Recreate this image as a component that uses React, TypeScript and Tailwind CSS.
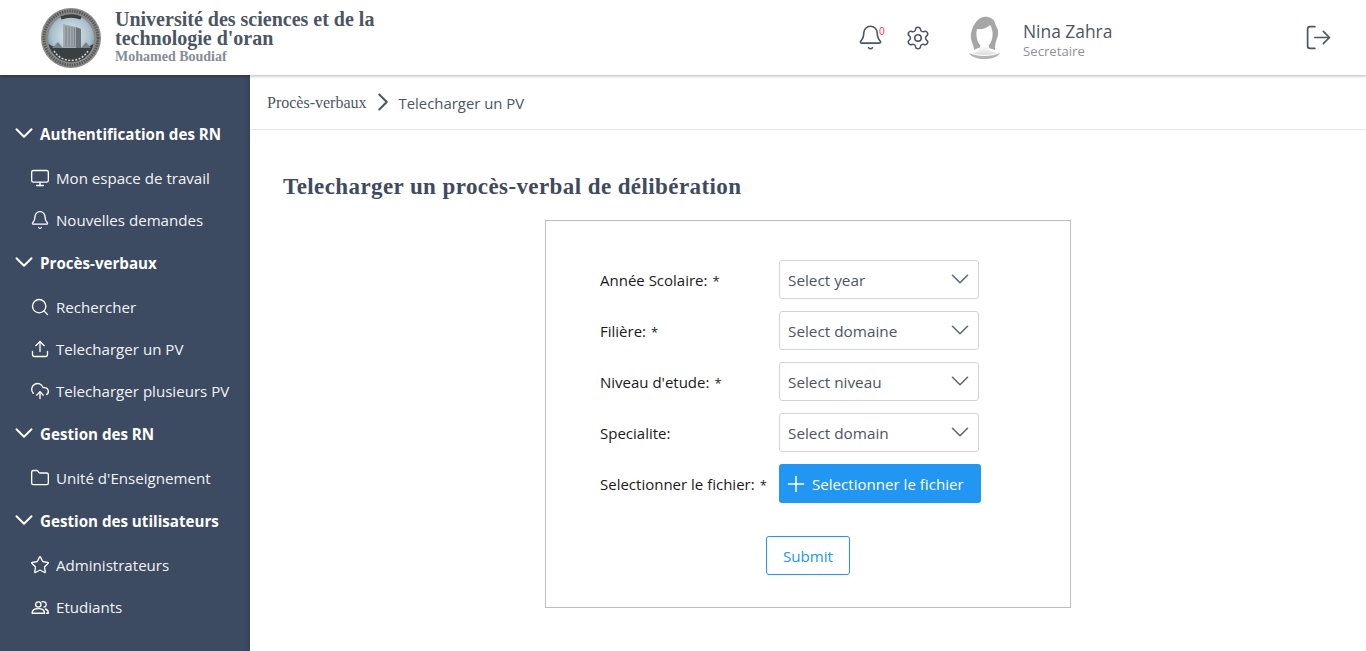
import { Bell, ChevronDown, ChevronRight, CloudUpload, Folder, LogOut, Monitor, Plus, Search, Settings, Star, Upload } from 'lucide-react';

const serif = { fontFamily: '"Liberation Serif", serif' };

function TeamIcon({ size = 20, strokeWidth = 1.6 }: { size?: number; strokeWidth?: number }) {
  return (
    <svg width={size} height={size} viewBox="0 0 24 24" fill="none" stroke="currentColor" strokeWidth={strokeWidth} strokeLinecap="round" strokeLinejoin="round">
      <circle cx="10" cy="9" r="3.2" />
      <path d="M2.5 19.5 C2.5 15.5 6 14 10 14 C14 14 17.5 15.5 17.5 19.5 Z" />
      <path d="M14.5 5.7 C17.2 4.9 19.5 6.7 19.5 9 C19.5 10.6 18.4 11.8 16.8 12.2" />
      <path d="M18.5 14.4 C20.6 15 22 16.7 22 19.5 L20 19.5" />
    </svg>
  );
}

const menu = [
  {
    title: 'Authentification des RN',
    items: [
      { label: 'Mon espace de travail', icon: Monitor },
      { label: 'Nouvelles demandes', icon: Bell },
    ],
  },
  {
    title: 'Procès-verbaux',
    items: [
      { label: 'Rechercher', icon: Search },
      { label: 'Telecharger un PV', icon: Upload },
      { label: 'Telecharger plusieurs PV', icon: CloudUpload },
    ],
  },
  {
    title: 'Gestion des RN',
    items: [{ label: "Unité d'Enseignement", icon: Folder }],
  },
  {
    title: 'Gestion des utilisateurs',
    items: [
      { label: 'Administrateurs', icon: Star },
      { label: 'Etudiants', icon: TeamIcon },
    ],
  },
];

const fields = [
  { label: 'Année Scolaire:', placeholder: 'Select year', required: true },
  { label: 'Filière:', placeholder: 'Select domaine', required: true },
  { label: "Niveau d'etude:", placeholder: 'Select niveau', required: true },
  { label: 'Specialite:', placeholder: 'Select domain', required: false },
];

function Logo() {
  return (
    <svg width="62" height="60" viewBox="0 0 62 60" className="shrink-0">
      <defs>
        <radialGradient id="sky" cx="50%" cy="45%" r="60%">
          <stop offset="0%" stopColor="#e6edf0" />
          <stop offset="70%" stopColor="#a9c0cd" />
          <stop offset="100%" stopColor="#6f8ea3" />
        </radialGradient>
      </defs>
      <circle cx="31" cy="30" r="30" fill="#8a8a86" />
      <circle cx="31" cy="30" r="27" fill="none" stroke="#555a5c" strokeWidth="3" strokeDasharray="1.5 1" />
      <circle cx="31" cy="30" r="23" fill="url(#sky)" />
      <path d="M8.5 36 A23 23 0 0 0 53.5 36 L46 40 L16 40 Z" fill="#3a3f41" />
      <path d="M14 43 A20 20 0 0 0 48 43" fill="none" stroke="#d8d8d8" strokeWidth="1.5" strokeDasharray="2 1.5" />
      <path d="M23 16 L36 19 L36 40 L23 40 Z" fill="#a3abae" />
      <path d="M36 19 L41 21 L41 40 L36 40 Z" fill="#6a7479" />
      <path d="M26 18 V39 M29 18.5 V39 M32 19 V39 M34.5 19.5 V39" stroke="#6c767b" strokeWidth="0.8" />
      <path d="M12 40 L18 34 L23 40 Z M41 40 L46 34 L51 40 Z" fill="#76878c" />
      <path d="M21 10 Q31 6 41 10" fill="none" stroke="#3a3f41" strokeWidth="3.5" />
    </svg>
  );
}

function Avatar() {
  return (
    <svg width="34" height="46" viewBox="0 0 34 46" className="shrink-0">
      <defs>
        <linearGradient id="neck" x1="0" y1="0" x2="0" y2="1">
          <stop offset="0%" stopColor="#ffffff" />
          <stop offset="100%" stopColor="#dcdcdc" />
        </linearGradient>
      </defs>
      <path d="M15 2 C21 1 26 4 27 8 C28 12 31 14 30 20 C29 25 27 27 27 35 L21 33 L10 33 L6 35 C6 29 2 26 3 19 C4 12 8 4 15 2 Z" fill="#a6a6a6" />
      <path d="M9 14 C14 15 19 13 22 10 C24 13 25 16 24.5 21 C24 27 20 33 16.5 33 C13 33 9 27 8.5 21 C8.3 18 8.5 16 9 14 Z" fill="#fff" />
      <path d="M12 31 L21 31 L22 36 C25 37 27 37.5 29 38 C22 40.5 11 40.5 4 38 C6 37.5 9 37 11 36 Z" fill="url(#neck)" />
      <path d="M1 38 C9 42 24 42 32 38 C28 46 5 46 1 38 Z" fill="#b4b4b4" />
    </svg>
  );
}

export default function App() {
  return (
    <div className="h-screen overflow-hidden flex flex-col bg-white" style={{ fontFamily: '"Open Sans", sans-serif' }}>
      <header className="relative z-20 h-[75px] shrink-0 flex items-center bg-white shadow-[0_1px_3px_rgba(0,0,0,0.3)]">
        <div className="ml-[40px] mr-[13px]">
          <Logo />
        </div>
        <div className="w-[270px] text-[#4b5563] font-bold" style={serif}>
          <div className="text-[20px] leading-[19px] mt-px">Université des sciences et de la technologie d'oran</div>
          <div className="text-[14px] leading-[18px] text-[#858c96]">Mohamed Boudiaf</div>
        </div>
        <div className="ml-auto flex items-center">
          <div className="relative text-[#4b5563]">
            <Bell size={27} strokeWidth={1.4} />
            <span className="absolute left-[22px] top-[1px] text-[10px] leading-[12px] text-red-500">0</span>
          </div>
          <Settings size={26} strokeWidth={1.4} className="ml-[21px] text-[#4b5563]" />
          <div className="ml-[37px]">
            <Avatar />
          </div>
          <div className="ml-[21px] w-[281px] mt-[4px]">
            <div className="text-[17.4px] leading-[22px] font-medium text-[#4b5563]">Nina Zahra</div>
            <div className="text-[13.2px] leading-[18px] font-medium text-[#8b929c]">Secretaire</div>
          </div>
          <LogOut size={29} strokeWidth={1.4} className="mr-[33px] text-[#4b5563]" />
        </div>
      </header>

      <div className="flex flex-1 min-h-0">
        <aside className="w-[250px] shrink-0 bg-[#3c4a62] pt-[37px] text-white">
          {menu.map(group => (
            <div key={group.title}>
              <div className="h-[44px] mb-px flex items-center pl-[9px]">
                <ChevronDown size={30} strokeWidth={1.6} className="mt-[-3px]" />
                <span className="ml-px text-[15.15px] font-bold">{group.title}</span>
              </div>
              {group.items.map(item => (
                <div key={item.label} className="h-[42px] flex items-center pl-[30px]">
                  <item.icon size={20} strokeWidth={1.6} />
                  <span className="ml-[6px] text-[15.1px] text-[#f3f4f6]">{item.label}</span>
                </div>
              ))}
            </div>
          ))}
        </aside>

        <main className="flex-1 min-w-0 relative shadow-[0_0_6px_rgba(0,0,0,0.25)]">
          <div className="h-[55px] border-b border-[#e5e7eb] flex items-center pl-[17px] text-[#4b5563]">
            <span className="text-[16px] mt-[1px]" style={serif}>Procès-verbaux</span>
            <ChevronRight size={30} strokeWidth={1.6} className="ml-px" />
            <span className="text-[14.9px] mt-[2px] ml-px">Telecharger un PV</span>
          </div>
          <h1 className="pl-[33px] pt-[43px] text-[23px] leading-[28px] font-bold text-[#3f4a5e] tracking-[0.41px]" style={serif}>
            Telecharger un procès-verbal de délibération
          </h1>
          <div className="mx-auto mt-[19px] w-[526px] h-[388px] border border-[#bdbdbd] pt-[39px] pl-[54px]">
            <div className="grid grid-cols-[179px_auto] justify-start gap-y-[12px] items-center text-[15px]">
              {fields.map(field => (
                <div key={field.label} className="contents">
                  <div className="text-[#1a1a1a] pt-[1px]">
                    {field.label}
                    {field.required && <span className="ml-[5px] text-[13px]">*</span>}
                  </div>
                  <div className="w-[200px] h-[39px] border border-[#d1d5db] rounded-[3px] flex items-center justify-between pl-[8px] pr-[3px] text-[#4b5563]">
                    <span className="text-[15.3px] pt-[1px]">{field.placeholder}</span>
                    <ChevronDown size={30} strokeWidth={1.3} className="mt-[-1px] text-[#5f6b7a]" />
                  </div>
                </div>
              ))}
              <div className="text-[#1a1a1a] whitespace-nowrap pt-[1px]">
                Selectionner le fichier:
                <span className="ml-[5px] text-[13px]">*</span>
              </div>
              <button className="w-[202px] h-[39px] rounded-[3px] bg-[#2196f3] text-white flex items-center pl-[4px]">
                <Plus size={26} strokeWidth={1.4} />
                <span className="ml-[3px] text-[15.1px] pt-[1px]">Selectionner le fichier</span>
              </button>
            </div>
            <button className="block mt-[33px] ml-[166px] w-[84px] h-[39px] rounded-[3px] border border-[#2196f3] text-[#2196f3] text-[15.1px] pt-[1px]">
              Submit
            </button>
          </div>
        </main>
      </div>
    </div>
  );
}
